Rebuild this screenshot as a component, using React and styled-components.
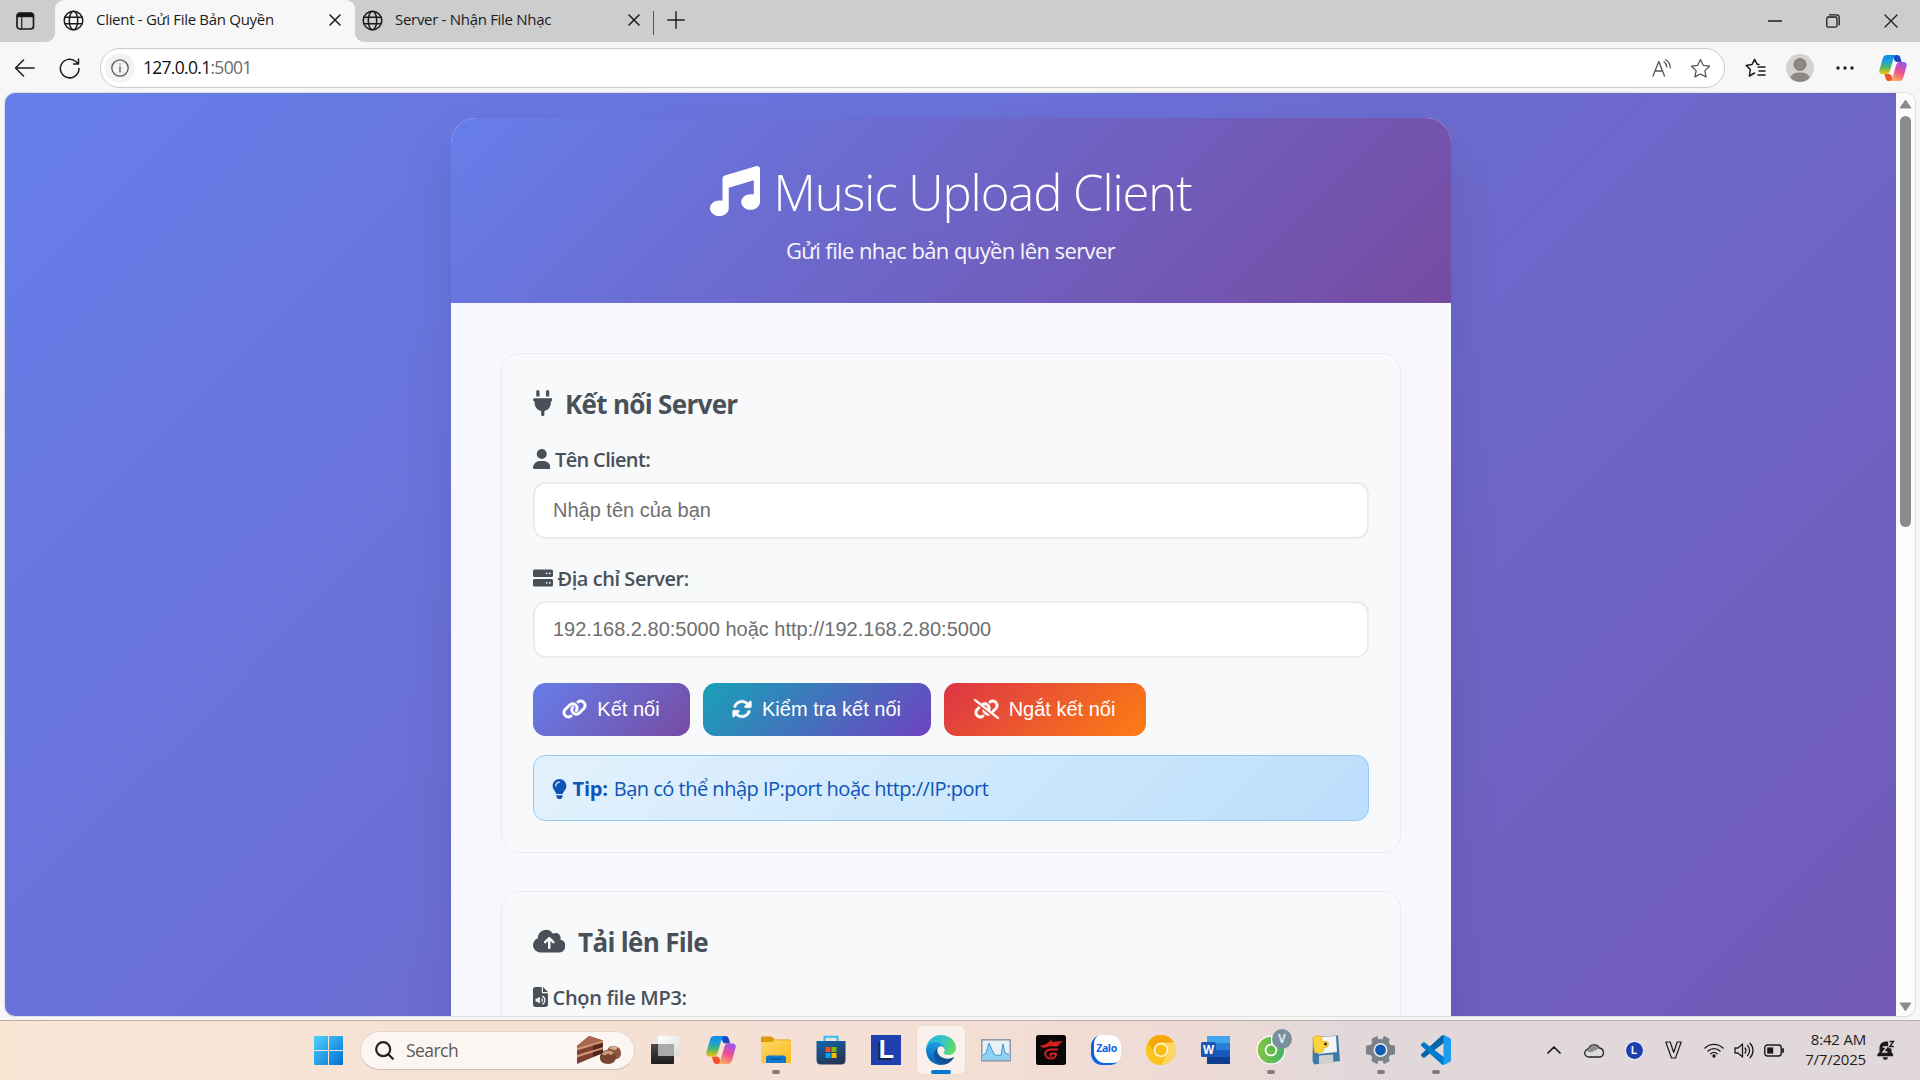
import React from "react";
import styled, { createGlobalStyle, css } from "styled-components";
import {
  FaMusic, FaPlug, FaUser, FaLink, FaRotate, FaLinkSlash,
  FaLightbulb, FaCloudArrowUp, FaFileAudio,
} from "react-icons/fa6";

const uiFont = '"Open Sans", "Noto Sans", sans-serif';
const formFont = '"Liberation Sans", Arial, sans-serif';

const GlobalStyle = createGlobalStyle`
  *, *::before, *::after { box-sizing: border-box; }
  body { margin: 0; overflow: hidden; font-family: ${uiFont}; }
  svg { display: block; flex: none; }
`;

/* ---------- window shell ---------- */
const Screen = styled.div`
  width: 1920px;
  height: 1080px;
  display: flex;
  flex-direction: column;
  background: #f7f7f7;
  overflow: hidden;
`;

const TabStrip = styled.header`
  flex: none;
  height: 42px;
  display: flex;
  background: #cdcdcd;
`;

const TabActions = styled.div`
  width: 55px;
  background: #f7f7f7;
  & > div {
    height: 42px;
    background: #cdcdcd;
    border-bottom-right-radius: 9px;
    display: flex;
    align-items: center;
    padding: 0 0 1px 16px;
  }
`;

const AfterTab = styled.div`
  flex: 1;
  background: #f7f7f7;
  & > div {
    height: 42px;
    background: #cdcdcd;
    border-bottom-left-radius: 9px;
    display: flex;
    align-items: center;
  }
`;

const Tab = styled.div`
  display: flex;
  align-items: center;
  height: 42px;
  padding-bottom: 2px;
  font-size: 15px;
  letter-spacing: -0.3px;
  color: #1b1b1b;
  white-space: nowrap;
  ${(p) =>
    p.$active
      ? css`
          width: 300px;
          padding-left: 8px;
          background: #f7f7f7;
          border-radius: 9px 9px 0 0;
        `
      : css`
          width: 298px;
          padding-left: 7px;
        `}
  span { flex: 1; margin: 0 0 2px 12px; }
`;

const TabClose = styled.div`
  width: 30px;
  margin-right: ${(p) => p.$end}px;
  display: flex;
  justify-content: center;
`;

const TabDivider = styled.div`
  width: 1px;
  height: 24px;
  margin-top: 3px;
  background: #555;
`;

const NewTab = styled.div`
  margin: 0 0 3px 13px;
`;

const WindowButtons = styled.div`
  margin-left: auto;
  display: flex;
  & > div {
    width: 58px;
    display: flex;
    justify-content: center;
    align-items: center;
  }
`;

const Toolbar = styled.nav`
  flex: none;
  height: 51px;
  display: flex;
  align-items: center;
  padding: 1px 13px 0 14px;
`;

const NavIcon = styled.div`
  width: 45px;
`;

const AddressBar = styled.div`
  width: 1626px;
  height: 40px;
  display: flex;
  align-items: center;
  padding: 0 13px 0 4px;
  margin-left: -4px;
  border: 1px solid #cbcbcb;
  border-radius: 20px;
  background: #fff;
`;

const Url = styled.div`
  padding-bottom: 2px;
  font-size: 17.5px;
  letter-spacing: -0.7px;
  color: #111;
  em { font-style: normal; color: #6b6b6b; }
`;

const SiteInfo = styled.div`
  width: 30px;
  height: 30px;
  margin-right: 8px;
  border-radius: 50%;
  background: #f3f3f3;
  display: grid;
  place-items: center;
`;

const AddressActions = styled.div`
  margin-left: auto;
  display: flex;
  align-items: center;
  gap: 18px;
`;

const ToolbarEnd = styled.div`
  flex: 1;
  display: flex;
  align-items: center;
  margin-left: 20px;
`;

const EndIcon = styled.div`
  margin-right: ${(p) => p.$after}px;
`;

const Viewport = styled.div`
  flex: none;
  height: 923px;
  margin: 0 5px;
  display: flex;
  border-radius: 10px;
  overflow: hidden;
  box-shadow: 0 0 1px 1px #dcdcdc;
`;

const Scrollbar = styled.div`
  width: 19px;
  background: #fcfcfc;
  display: flex;
  flex-direction: column;
  align-items: center;
  padding: 6px 0 4px;
`;

const Thumb = styled.div`
  width: 11px;
  height: 411px;
  margin: 7px 0 auto;
  border-radius: 6px;
  background: #8b8b8b;
`;

/* ---------- upload client page ---------- */
const Page = styled.main`
  flex: 1;
  height: 2010px;
  background: linear-gradient(135deg, #667eea 0%, #764ba2 100%);
  padding-top: 25px;
  display: flex;
  justify-content: center;
`;

const Card = styled.div`
  width: 1000px;
  height: 1960px;
  border-radius: 25px;
  background: rgba(255, 255, 255, 0.95);
  box-shadow: 0 25px 50px rgba(0, 0, 0, 0.1);
  overflow: hidden;
`;

const CardHeader = styled.div`
  height: 185px;
  padding-top: 40px;
  background: linear-gradient(135deg, #667eea 0%, #764ba2 100%);
  color: #fff;
`;

const Title = styled.h1`
  height: 66px;
  margin: 0;
  display: flex;
  align-items: center;
  justify-content: center;
  gap: 12px;
  font-size: 49px;
  font-weight: 300;
  letter-spacing: -1.05px;
  white-space: nowrap;
  svg { width: 52px; height: 50px; }
  span { padding-top: 2px; }
`;

const Subtitle = styled.p`
  margin: 11px 0 0;
  height: 30px;
  line-height: 30px;
  text-align: center;
  font-size: 22px;
  letter-spacing: -0.6px;
  opacity: 0.95;
`;

const CardBody = styled.div`
  padding: 50px;
  display: flex;
  flex-direction: column;
  gap: 38px;
`;

const Section = styled.section`
  height: 500px;
  padding: 31px;
  border: 1px solid #e9ecef;
  border-radius: 19px;
  background: #f8f9fa;
`;

const SectionTitle = styled.h2`
  height: 35px;
  margin: 0;
  display: flex;
  align-items: center;
  gap: 13px;
  font-size: 26px;
  font-weight: 700;
  letter-spacing: -0.68px;
  color: #495057;
  svg { width: ${(p) => p.$icon}px; height: 26px; }
  span { padding-top: 3px; }
`;

const Label = styled.label`
  height: 30px;
  margin-top: 24px;
  display: flex;
  align-items: center;
  gap: 5px;
  font-size: 20px;
  font-weight: 550;
  letter-spacing: ${(p) => p.$spacing}px;
  color: #495057;
  svg { width: ${(p) => p.$icon}px; height: 20px; }
`;

const Input = styled.input`
  display: block;
  width: 100%;
  height: 57px;
  margin-top: 8px;
  padding: 0 18.5px;
  border: 2px solid #e9ecef;
  border-radius: 12.5px;
  background: #fff;
  font: 20px ${formFont};
  &::placeholder { color: #6f6f6f; opacity: 1; }
`;

const Buttons = styled.div`
  display: flex;
  gap: 13px;
  margin-top: 25px;
`;

const Button = styled.button`
  height: 53px;
  width: ${(p) => p.$w}px;
  padding: 0;
  border: 0;
  border-radius: 12.5px;
  display: flex;
  align-items: center;
  justify-content: center;
  gap: 10px;
  font: 20px ${formFont};
  color: #fff;
  background: linear-gradient(135deg, ${(p) => p.$from} 0%, ${(p) => p.$to} 100%);
  svg {
    width: ${(p) => p.$icon}px;
    height: 20px;
    margin-bottom: 2px;
    stroke: currentColor;
    stroke-width: 12px;
    overflow: visible;
  }
`;

const Tip = styled.div`
  height: 66px;
  margin-top: 19px;
  padding: 1px 18px 0;
  display: flex;
  align-items: center;
  border: 1px solid #90caf9;
  border-radius: 12.5px;
  background: linear-gradient(135deg, #e3f2fd 0%, #bbdefb 100%);
  color: #0d55b8;
  font-size: 20px;
  letter-spacing: -0.5px;
  white-space: nowrap;
  svg { width: 15px; height: 20px; margin-right: 6px; }
  strong { margin-right: 6px; letter-spacing: -0.2px; }
`;

/* ---------- taskbar ---------- */
const Gap = styled.div`
  flex: 1;
  border-bottom: 1px solid #b5aca8;
`;

const Taskbar = styled.footer`
  flex: none;
  height: 59px;
  display: flex;
  align-items: center;
  padding: 0 25px 1px 314px;
  background: linear-gradient(90deg, #f9e6d5 0%, #f6e2d4 25%, #f3dfd4 50%, #eddad5 63%, #e2d8da 70%, #e1d8da 100%);
`;

const SearchBox = styled.div`
  width: 275px;
  height: 39px;
  margin: 0 3px 0 17px;
  padding: 0 12px 0 14px;
  display: flex;
  align-items: center;
  border: 1px solid #e6d5c9;
  border-bottom-color: #cdbfb6;
  border-radius: 20px;
  background: #fcf6f2;
  font-size: 17.5px;
  letter-spacing: -0.55px;
  color: #5e5a58;
  span { flex: 1; margin: 0 0 0 12px; }
`;

const AppSlot = styled.div`
  position: relative;
  width: 55px;
  height: 58px;
  display: grid;
  place-items: center;
`;

const Tile = styled.div`
  width: 48px;
  height: 48px;
  border-radius: 5px;
  background: #fbf1ec;
  box-shadow: 0 0 1px #cdbfb8;
  display: grid;
  place-items: center;
`;

const RunMark = styled.i`
  position: absolute;
  bottom: 5px;
  left: 50%;
  transform: translateX(-50%);
  width: ${(p) => (p.$active ? 20 : 8)}px;
  height: 4px;
  border-radius: 2px;
  background: ${(p) => (p.$active ? "#0078d4" : "#857d7c")};
`;

const Badge = styled.b`
  position: absolute;
  left: 29px;
  top: 8px;
  width: 20px;
  height: 20px;
  border-radius: 50%;
  background: #78909c;
  color: #dfe5e8;
  font: 700 12px/20px Roboto, sans-serif;
  text-align: center;
`;

const LetterTile = styled.div`
  width: 30px;
  height: 30px;
  background: #1e3fae;
  color: #fff;
  font: 700 25px/29px ${formFont};
  text-align: center;
  text-indent: 2px;
  text-shadow: -2px 2px 0 #14244f;
`;

const ZaloTile = styled.div`
  width: 30px;
  height: 30px;
  border-radius: 11px;
  background: #fff;
  box-shadow: inset 3px -2px 0 #0b63e5;
  color: #0b63e5;
  font: 700 10.5px/27px ${uiFont};
  letter-spacing: -0.4px;
  text-indent: 2px;
  text-align: center;
`;

const Tray = styled.div`
  margin-left: auto;
  display: flex;
  align-items: center;
`;

const TraySlot = styled.div`
  width: ${(p) => p.$w}px;
  display: grid;
  place-items: center;
`;

const TrayL = styled.div`
  width: 19px;
  height: 19px;
  border: 1px solid #fff;
  border-radius: 50%;
  background: #1e3fae;
  color: #fff;
  font: 700 10px/17px ${formFont};
  text-align: center;
`;

const Clock = styled.div`
  width: 72px;
  margin-right: 11px;
  padding-bottom: 2px;
  text-align: right;
  font-size: 15px;
  line-height: 20px;
  letter-spacing: -0.2px;
  color: #1d1b1b;
`;

/* ---------- drawings ---------- */
const Line = ({ w = 20, h = w, vb, sw = 1.4, color = "#1b1b1b", children }) => (
  <svg width={w} height={h} viewBox={vb || `0 0 ${w} ${h}`} fill="none" stroke={color}
    strokeWidth={sw} strokeLinecap="round" strokeLinejoin="round">{children}</svg>
);

const Globe = () => (
  <Line w={21} sw={1.5}>
    <circle cx="10.5" cy="10.5" r="9.3" />
    <ellipse cx="10.5" cy="10.5" rx="4.2" ry="9.3" />
    <path d="M2 7.3h17M2 13.7h17" />
  </Line>
);

const Cross = ({ s = 11, sw = 1.5 }) => (
  <Line w={s} sw={sw}><path d={`M1 1 ${s - 1} ${s - 1}M${s - 1} 1 1 ${s - 1}`} /></Line>
);

const starPath = "M10 1.5 12.6 7l6 .8-4.4 4.2 1.1 6L10 15.2 4.700 18l1.100-6L1.400 7.800l6-.8Z";

const ServerStack = () => (
  <svg viewBox="0 0 20 20" fill="currentColor">
    <path fillRule="evenodd" d="M1.500 1.500h17A1.500 1.500 0 0 1 20 3v4.500A1.500 1.500 0 0 1 18.500 9h-17A1.500 1.500 0 0 1 0 7.500V3a1.500 1.500 0 0 1 1.500-1.500ZM13.700 4.400a.9.900 0 1 0 0 1.800.9.900 0 0 0 0-1.800ZM16.800 4.400a.9.900 0 1 0 0 1.800.9.900 0 0 0 0-1.800Z" />
    <path fillRule="evenodd" d="M1.500 11h17a1.500 1.500 0 0 1 1.500 1.500V17a1.500 1.500 0 0 1-1.500 1.500h-17A1.500 1.500 0 0 1 0 17v-4.500A1.500 1.500 0 0 1 1.500 11ZM13.700 13.900a.9.900 0 1 0 0 1.800.9.900 0 0 0 0-1.800ZM16.800 13.900a.9.900 0 1 0 0 1.800.9.900 0 0 0 0-1.800Z" />
  </svg>
);

const CopilotLogo = ({ id, size = 29 }) => (
  <svg width={size} height={size} viewBox="0 0 30 30">
    <defs>
      <linearGradient id={`${id}a`} x1="0" y1="0" x2="0" y2="1">
        <stop offset="0" stopColor="#0f8fe8" /><stop offset=".35" stopColor="#1c9fd8" />
        <stop offset=".65" stopColor="#56b766" /><stop offset="1" stopColor="#f6c40a" />
      </linearGradient>
      <linearGradient id={`${id}b`} x1=".7" y1="0" x2=".3" y2="1">
        <stop offset="0" stopColor="#9a55ec" /><stop offset=".5" stopColor="#ee5090" />
        <stop offset="1" stopColor="#fdb05e" />
      </linearGradient>
    </defs>
    <path d="M14 1h5.500c2 0 2.800 1 3.400 3l1.300 4.500h-4.500c-2 0-3-1-3.500-3Z" fill="#1b48c8" />
    <path d="M16 29h-5.500c-2 0-2.800-1-3.400-3l-1.300-4.500h4.500c2 0 3 1 3.500 3Z" fill="#f4502e" />
    <path d="M8.500 1H19c-2 0-2.800 1.500-3.400 3.600l-3.800 13c-.7 2.400-1.800 3.900-4.300 3.900H3.700C.8 21.500-.2 19.500.5 17L4 4.800C4.700 2.300 6 1 8.500 1Z" fill={`url(#${id}a)`} />
    <path d="M21.500 29H11c2 0 2.800-1.500 3.400-3.600l3.800-13c.7-2.400 1.800-3.900 4.300-3.900h3.800c2.900 0 3.900 2 3.200 4.500L26 25.200c-.7 2.500-2 3.800-4.500 3.800Z" fill={`url(#${id}b)`} />
  </svg>
);

const WindowsLogo = () => (
  <svg width="29" height="29" viewBox="0 0 29 29">
    <defs><linearGradient id="win" x1="0" y1="0" x2="1" y2="1"><stop stopColor="#4fd0ff" /><stop offset="1" stopColor="#0070d2" /></linearGradient></defs>
    <path fill="url(#win)" d="M1 0h13v14H0V1a1 1 0 0 1 1-1ZM15 0h13a1 1 0 0 1 1 1v13H15ZM0 15h14v14H1a1 1 0 0 1-1-1ZM15 15h14v13a1 1 0 0 1-1 1H15Z" />
  </svg>
);

const Cake = () => (
  <svg width="46" height="30" viewBox="0 0 46 30">
    <path d="M1 11 13 1l14 4.500V18L1 29Z" fill="#7d4131" />
    <path d="M1 11 13 1l14 4.500L1 13.500Z" fill="#a8674f" />
    <path d="m1 13 26-7.500v2L1 15.500ZM1 20l26-8v2.200L1 22.500Z" fill="#d2936f" />
    <path d="M17 10.800 27 8v4l-10 3ZM17 17.300l10-3V18l-10 3.800Z" fill="#512620" />
    <path d="M31 16c1-4 3-5 7-5s7 3 7 7-2 6-6 6-8-3-8-8Z" fill="#8f5640" />
    <path d="M33 13.500c2-2.500 7-3 9-.5l-3 2Z" fill="#d9b08d" />
    <path d="M24 21c1-4 4-6 8-6s8 3 8 7-3 7-8 7-9-3-8-8Z" fill="#7b4332" />
    <path d="M26 19c2-4 9-5 12-1l-3 2-3-1.500-3 2Z" fill="#c99c7c" />
  </svg>
);

const TaskView = () => (
  <svg width="31" height="30" viewBox="0 0 31 30">
    <defs>
      <linearGradient id="tv" x2="0" y2="1"><stop stopColor="#4a4a4a" /><stop offset="1" stopColor="#1c1c1c" /></linearGradient>
      <linearGradient id="tv2" x2="1" y2="1"><stop stopColor="#fff" /><stop offset="1" stopColor="#dcdad9" /></linearGradient>
    </defs>
    <rect x="1" y="9" width="23" height="20" rx="1" fill="url(#tv)" />
    <rect x="8" y="1" width="22.500" height="20" rx="1" fill="url(#tv2)" />
    <path d="M8 9h16v12H8Z" fill="#aaa" />
  </svg>
);

const Folder = () => (
  <svg width="30" height="28" viewBox="0 0 30 28">
    <defs><linearGradient id="fd" x2="1" y2="1"><stop stopColor="#ffd968" /><stop offset="1" stopColor="#fbb91f" /></linearGradient></defs>
    <path d="M0 1.500Q0 .5 1 .5h9q1 0 2 1.300L13.500 3.500H28q2 0 2 2V12H0Z" fill="#dc9a05" />
    <path d="M0 6h11l2-1.800h15.500q1.500 0 1.500 1.500V26q0 1-1 1H1q-1 0-1-1Z" fill="url(#fd)" />
    <path d="M5 27v-5q0-2.500 2.500-2.500h15Q25 19.500 25 22v5Z" fill="#0d77cf" />
    <path d="M9 23h12" stroke="#0a4b8c" strokeWidth="1.200" />
  </svg>
);

const Store = () => (
  <svg width="30" height="30" viewBox="0 0 30 30">
    <defs><linearGradient id="st" x2=".5" y2="1"><stop stopColor="#1065ad" /><stop offset="1" stopColor="#263657" /></linearGradient></defs>
    <path d="M8.500 7V1.800h13V7" fill="none" stroke="#2fc0f2" strokeWidth="2" />
    <path d="M.5 6h29v19q0 4.500-4.500 4.500H5Q.5 29.500.5 25Z" fill="url(#st)" />
    <path d="M9.500 12h5v5h-5Z" fill="#f25022" /><path d="M15.500 12h5v5h-5Z" fill="#7fba00" />
    <path d="M9.500 18h5v5h-5Z" fill="#00a4ef" /><path d="M15.500 18h5v5h-5Z" fill="#ffb900" />
  </svg>
);

const EdgeLogo = () => (
  <svg width="30" height="30" viewBox="0 0 256 256">
    <defs>
      <linearGradient id="e1" x1="0" y1=".5" x2="1" y2=".5"><stop stopColor="#0c59a4" /><stop offset="1" stopColor="#114a8b" /></linearGradient>
      <linearGradient id="e2" x1=".6" y1=".1" x2=".3" y2="1"><stop stopColor="#1b9de2" /><stop offset=".5" stopColor="#1283d0" /><stop offset="1" stopColor="#0a5cb0" /></linearGradient>
      <linearGradient id="e3" x1="0" y1=".3" x2="1" y2=".6"><stop stopColor="#2cb4e8" /><stop offset=".5" stopColor="#36c5c9" /><stop offset="1" stopColor="#66dc5c" /></linearGradient>
    </defs>
    <path fill="url(#e1)" d="M231 190.500c-3.400 1.800-6.900 3.400-10.500 4.700a101.900 101.900 0 0 1-35.900 6.400c-47.300 0-88.500-32.500-88.500-74.300.1-11.400 6.400-21.900 16.400-27.300-42.800 1.800-53.800 46.400-53.800 72.500 0 73.900 68.100 81.400 82.800 81.400 7.900 0 19.800-2.300 27-4.600l1.300-.4a128.300 128.300 0 0 0 66.600-52.800c1.200-1.900.6-4.300-1.300-5.500-1.300-.8-2.800-.8-4.100-.1Z" />
    <path fill="url(#e2)" d="M105.700 241.400a79.200 79.200 0 0 1-22.700-21.300 80.700 80.700 0 0 1 29.500-120c3.200-1.500 8.500-4.100 15.600-4a32.400 32.400 0 0 1 25.700 13c4.200 5.500 6.400 12.300 6.300 19.200 0-.2 24.500-79.600-80-79.600-43.900 0-80 41.700-80 78.200a130.200 130.200 0 0 0 12.100 56 128 128 0 0 0 156.400 67 75.500 75.500 0 0 1-62.900-8.500Z" />
    <path fill="url(#e3)" d="M152.300 148.900c-.9 1-3.400 2.500-3.400 5.600 0 2.600 1.700 5.200 4.800 7.300 14.300 10 41.400 8.600 41.500 8.600 10.700 0 21.100-2.900 30.300-8.300A61.400 61.400 0 0 0 256 109.200c.3-22.400-8-37.300-11.300-43.900C223.500 23.900 177.700 0 128 0A128 128 0 0 0 0 126.200c.5-36.500 36.800-66 80-66 3.500 0 23.500.3 42 10.100 16.300 8.500 24.900 18.900 30.800 29.200 6.200 10.700 7.300 24.100 7.300 29.500s-2.700 13.300-7.800 19.900Z" />
  </svg>
);

const Monitor = () => (
  <svg width="30" height="23" viewBox="0 0 30 23">
    <rect x=".8" y=".8" width="28.400" height="21" fill="#e9f1f6" stroke="#8b99a5" strokeWidth="1.500" />
    <path d="M1.500 16.500 5 14l3-10 3 7 2 4 3 1.500L20 16l2-11 2 9 4 1.500V21H1.500Z" fill="#8fd0f4" />
    <path d="M1.500 16.500 5 14l3-10 3 7 2 4 3 1.500L20 16l2-11 2 9 4 1.500" fill="none" stroke="#3f9ad0" />
  </svg>
);

const Garena = () => (
  <svg width="30" height="30" viewBox="0 0 30 30">
    <rect width="30" height="30" rx="2.500" fill="#090606" />
    <path d="M4 10.500c3 .3 5-1 7.500-2.500C13.500 6.700 14.500 6 15.500 4c.8 1.200.5 2.500 0 3.200 4-.7 8-.9 11.500-1-1.500 2-4 2.600-6 2.800 1 .3 2.500.2 3.500-.1-1.500 2.300-4.500 2.700-7 2.500-3-.2-5.500 0-7.500 1.200C7 13.200 5 12.500 4 10.500Z" fill="#d8201f" />
    <path d="M22 14.200c-3 1-5-.2-8 .3-3 .6-4.800 2.300-4.800 4.500 0 3.200 3 4.600 6 4.500 3.300-.1 5-2 4.800-4.700-1.700-.6-3.500-.5-5.300.2v2.700" fill="none" stroke="#d8201f" strokeWidth="2" />
  </svg>
);

const Canary = () => (
  <svg width="30" height="30" viewBox="0 0 30 30">
    <circle cx="15" cy="15" r="15" fill="#fbc21f" />
    <path d="M2 7.500A15 15 0 0 1 28 7.500H15a7.500 7.500 0 0 0-6.500 11.200Z" fill="#f7a70a" />
    <path d="M28 7.500A15 15 0 0 1 15 30l6.500-11.300A7.500 7.500 0 0 0 15 7.500Z" fill="#fdd663" />
    <path d="M2 7.500A15 15 0 0 0 15 30l6.500-11.300a7.500 7.500 0 0 1-13 0Z" fill="#fcc41c" />
    <circle cx="15" cy="15" r="7.300" fill="#fff3d0" /><circle cx="15" cy="15" r="5.600" fill="#fbbc14" />
  </svg>
);

const WordIcon = styled.div`
  width: 29px;
  height: 28px;
  padding: 6px 0 7px;
  background: linear-gradient(#41a5ee 0 25%, #2b7cd3 25% 50%, #185abd 50% 75%, #103f91 75%) right / 23px 28px no-repeat;
  b {
    display: block;
    width: 15px;
    height: 15px;
    border-radius: 1.5px;
    background: #1c56b4;
    color: #fff;
    font: 700 11.5px/15px ${uiFont};
    text-align: center;
  }
`;

const CocCoc = () => (
  <svg width="30" height="30" viewBox="0 0 30 30">
    <defs><linearGradient id="cc"><stop stopColor="#84c441" /><stop offset="1" stopColor="#3fb566" /></linearGradient></defs>
    <circle cx="15" cy="15" r="14.500" fill="#fff" /><circle cx="15" cy="15" r="13.300" fill="url(#cc)" />
    <path d="M15 0v10l12-8Z" fill="#fff" />
    <circle cx="15" cy="15" r="6.300" fill="#fff" /><circle cx="15" cy="15" r="4.500" fill="#62bb46" />
  </svg>
);

const PyDisk = () => (
  <svg width="30" height="30" viewBox="0 0 30 30">
    <path d="m2 2 25-1.500L29 26 3 29.500 1.500 26Z" fill="#3d7aa8" />
    <path d="m7 2 18-1 1 16-19 2Z" fill="#f4f5f5" />
    <path d="m8 20.500 14-1 .5 8.500-14.500 1Z" fill="#cfcfcf" />
    <path d="M2 2.500Q5-.5 9 1 12 2.500 10.500 7q4-2 6.500.5 1.500 3.500-1.500 5-2 .7-3.500 0l.5 3.500Q8 19 3.500 17.500 2 10 2 2.500Z" fill="#ffd43b" stroke="#e0a91c" strokeWidth=".7" />
    <circle cx="14.500" cy="9" r="1.500" fill="#3a2c00" />
  </svg>
);

const Gear = () => (
  <svg width="31" height="30" viewBox="0 0 30 30">
    <path d="M11.500 1.500 12.500 5l2.500-.5 2.500.5 1-3.500 5 2.500-.5 4 2 2.500 4 .5v8l-4 .5-2 2.500.5 4-5 2.500-1-3.500-2.500.5-2.500-.5-1 3.500-5-2.500.5-4-2-2.500-4-.5v-8l4-.5 2-2.500-.5-4Z" fill="#7a8389" stroke="#7a8389" strokeLinejoin="round" />
    <circle cx="15" cy="15" r="7" fill="#e9eaec" /><circle cx="15" cy="15" r="5.400" fill="#0f5cb0" />
  </svg>
);

const VsCode = () => (
  <svg width="30" height="30" viewBox="0 0 100 100">
    <path d="M96.500 10.800 75.900.9a6.200 6.200 0 0 0-7.100 1.200L1.300 63.600a4.200 4.200 0 0 0 0 6.200l5.500 5a4.200 4.200 0 0 0 5.300.2L93.300 13.400A4.100 4.100 0 0 1 100 16.700v-.2a6.300 6.300 0 0 0-3.500-5.700Z" fill="#0065a9" />
    <path d="m96.500 89.200-20.600 9.900a6.200 6.200 0 0 1-7.100-1.200L1.300 36.400a4.200 4.200 0 0 1 0-6.200l5.500-5a4.200 4.200 0 0 1 5.300-.2l81.200 61.600a4.100 4.100 0 0 0 6.700-3.300v.2a6.300 6.300 0 0 1-3.500 5.700Z" fill="#007acc" />
    <path d="M75.900 99.100a6.200 6.200 0 0 1-7.100-1.200 3.700 3.700 0 0 0 6.200-2.600V4.700a3.700 3.700 0 0 0-6.200-2.600A6.200 6.200 0 0 1 75.900.9l20.600 9.900a6.300 6.300 0 0 1 3.500 5.700v67a6.300 6.300 0 0 1-3.500 5.700Z" fill="#1f9cf0" />
  </svg>
);

const taskbarApps = [
  { name: "taskview", icon: <TaskView /> },
  { name: "copilot", icon: <CopilotLogo id="tb" size={30} /> },
  { name: "folder", icon: <Folder />, running: true },
  { name: "store", icon: <Store /> },
  { name: "l", icon: <LetterTile>L</LetterTile> },
  { name: "edge", icon: <Tile><EdgeLogo /></Tile>, running: true, active: true },
  { name: "monitor", icon: <Monitor /> },
  { name: "garena", icon: <Garena /> },
  { name: "zalo", icon: <ZaloTile>Zalo</ZaloTile> },
  { name: "canary", icon: <Canary /> },
  { name: "word", icon: <WordIcon><b>W</b></WordIcon> },
  { name: "coccoc", icon: <CocCoc />, running: true, badge: "V" },
  { name: "python", icon: <PyDisk /> },
  { name: "settings", icon: <Gear />, running: true },
  { name: "vscode", icon: <VsCode />, running: true },
];

function BrowserChrome() {
  return (
    <>
      <TabStrip>
        <TabActions>
          <div>
            <Line w={19} h={18} sw={1.7}>
              <rect x="1" y="1" width="16.500" height="16" rx="3" />
              <path d="M1.500 4.500h15.500V3.500a2 2 0 0 0-2-2H3.500a2 2 0 0 0-2 2Z" fill="#111" />
              <path d="M5.700 5.500V17" strokeWidth="1.200" />
            </Line>
          </div>
        </TabActions>
        <Tab $active>
          <Globe />
          <span>Client - Gửi File Bản Quyền</span>
          <TabClose $end={5}><Cross s={12} /></TabClose>
        </Tab>
        <AfterTab>
          <div>
            <Tab>
              <Globe />
              <span>Server - Nhận File Nhạc</span>
              <TabClose $end={4}><Cross s={12} /></TabClose>
            </Tab>
            <TabDivider />
            <NewTab><Line w={18}><path d="M9 .8v16.400M.8 9h16.400" /></Line></NewTab>
            <WindowButtons>
              <div><Line w={14} h={2} sw={1.3}><path d="M.5 1h13" /></Line></div>
              <div>
                <Line w={14} sw={1.3}>
                  <rect x=".8" y="3" width="10.200" height="10.200" rx="1.500" />
                  <path d="M3.500.8h7.200a2.500 2.500 0 0 1 2.500 2.500v7.500" />
                </Line>
              </div>
              <div><Cross s={14} sw={1.3} /></div>
            </WindowButtons>
          </div>
        </AfterTab>
      </TabStrip>
      <Toolbar>
        <NavIcon><Line w={21} h={18} sw={1.5}><path d="M20 9H1.500M9.500 1 1.500 9l8 8" /></Line></NavIcon>
        <NavIcon>
          <Line w={22} h={21} sw={1.5}>
            <path d="M20 10.500a9.300 9.300 0 1 1-3-6.800L19.200 5.800M19.500 1v5h-5" />
          </Line>
        </NavIcon>
        <AddressBar>
          <SiteInfo>
            <Line w={18} sw={1.3} color="#555"><circle cx="9" cy="9" r="8.200" /><path d="M9 8v5M9 5v.2" /></Line>
          </SiteInfo>
          <Url>127.0.0.1<em>:5001</em></Url>
          <AddressActions>
            <Line w={20} h={18} sw={1.3} color="#555">
              <path d="M1 17 6.800 2.500 12.500 17M3 12h7.500M12 2.800a7 7 0 0 1 2.700 5M13.500 .8a9 9 0 0 1 4.800 8" />
            </Line>
            <Line w={21} vb="0 0 20 20" sw={1.2} color="#555"><path d={starPath} /></Line>
          </AddressActions>
        </AddressBar>
        <ToolbarEnd>
          <EndIcon $after={20}>
            <Line w={21} h={20} sw={1.5}>
              <path d="M14 6.500 12.200 6.300 9.600 1.300 7 6.500l-5.800.9L5.300 11.500 4.400 18l5.200-3M13 9h7M14 13h6M13 17h7" />
            </Line>
          </EndIcon>
          <EndIcon $after={22}>
            <svg width="28" height="28" viewBox="0 0 28 28">
              <circle cx="14" cy="14" r="14" fill="#d5d2cf" />
              <circle cx="14" cy="10.500" r="6" fill="#8d8986" stroke="#6f6b69" strokeWidth=".8" />
              <path d="M4.500 24c.5-4 4.500-5.500 9.500-5.500s9 1.500 9.500 5.500A14 14 0 0 1 14 28a14 14 0 0 1-9.500-4Z" fill="#8d8986" />
            </svg>
          </EndIcon>
          <EndIcon $after={25}>
            <svg width="18" height="4" viewBox="0 0 18 4" fill="#1b1b1b"><circle cx="2" cy="2" r="1.700" /><circle cx="9" cy="2" r="1.700" /><circle cx="16" cy="2" r="1.700" /></svg>
          </EndIcon>
          <CopilotLogo id="nav" size={28} />
        </ToolbarEnd>
      </Toolbar>
    </>
  );
}

function UploadPage() {
  return (
    <Page>
      <Card>
        <CardHeader>
          <Title><FaMusic /><span>Music Upload Client</span></Title>
          <Subtitle>Gửi file nhạc bản quyền lên server</Subtitle>
        </CardHeader>
        <CardBody>
          <Section>
            <SectionTitle $icon={19.5}><FaPlug /><span>Kết nối Server</span></SectionTitle>
            <Label $icon={17.5} $spacing={-0.65}><FaUser />Tên Client:</Label>
            <Input placeholder="Nhập tên của bạn" />
            <Label $icon={20} $spacing={-0.45}><ServerStack />Địa chỉ Server:</Label>
            <Input placeholder="192.168.2.80:5000 hoặc http://192.168.2.80:5000" />
            <Buttons>
              <Button $w={157} $icon={25} $from="#667eea" $to="#764ba2"><FaLink />Kết nối</Button>
              <Button $w={228} $icon={20} $from="#17a2b8" $to="#6f42c1"><FaRotate />Kiểm tra kết nối</Button>
              <Button $w={202} $icon={25} $from="#dc3545" $to="#fd7e14"><FaLinkSlash />Ngắt kết nối</Button>
            </Buttons>
            <Tip><FaLightbulb /><strong>Tip:</strong>Bạn có thể nhập IP:port hoặc http://IP:port</Tip>
          </Section>
          <Section>
            <SectionTitle $icon={32.5}><FaCloudArrowUp /><span>Tải lên File</span></SectionTitle>
            <Label $icon={15} $spacing={-0.28}><FaFileAudio />Chọn file MP3:</Label>
          </Section>
        </CardBody>
      </Card>
    </Page>
  );
}

export default function App() {
  return (
    <>
      <GlobalStyle />
      <Screen>
        <BrowserChrome />
        <Viewport>
          <UploadPage />
          <Scrollbar>
            <svg width="13" height="10" viewBox="0 0 13 10"><path d="M6.500 1.200 12 9H1Z" fill="#8b8b8b" stroke="#8b8b8b" strokeLinejoin="round" /></svg>
            <Thumb />
            <svg width="13" height="10" viewBox="0 0 13 10"><path d="M6.500 8.800 12 1H1Z" fill="#8b8b8b" stroke="#8b8b8b" strokeLinejoin="round" /></svg>
          </Scrollbar>
        </Viewport>
        <Gap />
        <Taskbar>
          <WindowsLogo />
          <SearchBox>
            <Line w={19} sw={2.2} color="#222"><circle cx="8.200" cy="8.200" r="7" /><path d="m13.500 13.500 4.300 4.300" /></Line>
            <span>Search</span>
            <Cake />
          </SearchBox>
          {taskbarApps.map((a) => (
            <AppSlot key={a.name}>
              {a.icon}
              {a.badge && <Badge>{a.badge}</Badge>}
              {a.running && <RunMark $active={a.active} />}
            </AppSlot>
          ))}
          <Tray>
            <TraySlot $w={40}><Line w={14} h={8} sw={1.7}><path d="m1 7 6-6 6 6" /></Line></TraySlot>
            <TraySlot $w={40}>
              <svg width="21" height="15" viewBox="0 0 21 15">
                <path d="M5 14a4 4 0 0 1-.5-8A6 6 0 0 1 15.500 5a4.600 4.600 0 0 1 .5 9Z" fill="#ddd" stroke="#222" strokeWidth="1.300" />
                <path d="M4.500 6A6 6 0 0 1 15 5.500L7 9.500 2 8Z" fill="#8d8d8d" />
              </svg>
            </TraySlot>
            <TraySlot $w={40}><TrayL>L</TrayL></TraySlot>
            <TraySlot $w={39}>
              <Line w={17} h={18} sw={1.2}><path d="M.8 1h4.400l3.500 10.500L12.200 1h4L10.500 17H6.500Z" /></Line>
            </TraySlot>
            <TraySlot $w={41}>
              <Line w={20} h={16} sw={1.4}>
                <path d="M1 6a13 13 0 0 1 18 0M4 9a8.800 8.800 0 0 1 12 0M6.800 11.800a4.800 4.800 0 0 1 6.400 0" />
                <circle cx="10" cy="14" r="1" fill="#1b1b1b" />
              </Line>
            </TraySlot>
            <TraySlot $w={20}>
              <Line w={20} h={17} sw={1.3}>
                <path d="M1 6v5h3l4.500 4V2L4 6ZM11 6a4 4 0 0 1 0 5M13.500 3.500a7 7 0 0 1 0 10M16 1.200a10.500 10.500 0 0 1 0 14.600" />
              </Line>
            </TraySlot>
            <TraySlot $w={40}>
              <Line w={20} h={13} sw={1.4}>
                <rect x=".8" y="1" width="16.400" height="11" rx="2.500" />
                <rect x="3.200" y="3.400" width="6" height="6.200" fill="#1b1b1b" stroke="none" />
                <path d="M19 5v3" strokeWidth="1.800" />
              </Line>
            </TraySlot>
            <Clock>8:42 AM<br />7/7/2025</Clock>
            <svg width="18" height="20" viewBox="0 0 18 20">
              <path d="M8.500 1.500A6 6 0 0 0 2.500 7.500V12L.3 14.500V16.200h15.900v-1.700L14.500 12V1.500Z" fill="#1b1b1b" />
              <path d="M5.800 17.200h5a2.500 2.500 0 0 1-5 0Z" fill="#1b1b1b" />
              <path d="M11.200 0H18v8.500h-5l-1.800-1Z" fill="#e1d8da" />
              <path d="M5.800 7h4.200l-4 5h4.400" fill="none" stroke="#e6dcdd" strokeWidth="1.300" />
              <path d="M12.600 1.500h3.900L12.800 6.500h4" fill="none" stroke="#1b1b1b" strokeWidth="1.400" />
            </svg>
          </Tray>
        </Taskbar>
      </Screen>
    </>
  );
}
